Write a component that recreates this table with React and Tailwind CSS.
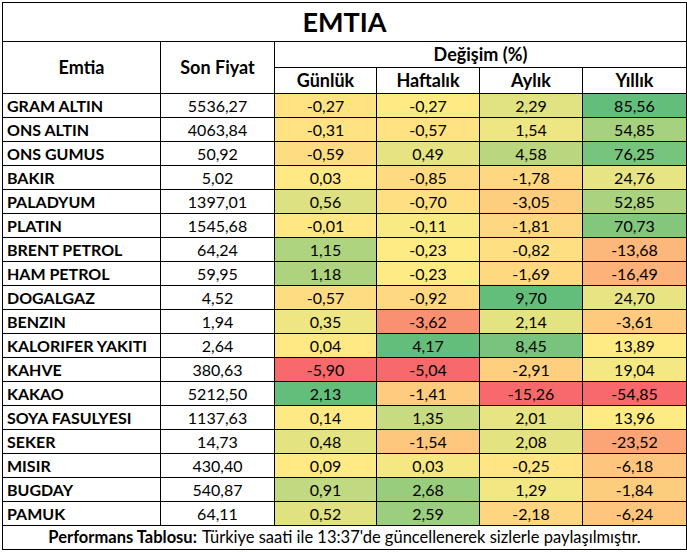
import React from 'react'

const rows = [
  ['GRAM ALTIN', '5536,27', -0.27, -0.27, 2.29, 85.56],
  ['ONS ALTIN', '4063,84', -0.31, -0.57, 1.54, 54.85],
  ['ONS GUMUS', '50,92', -0.59, 0.49, 4.58, 76.25],
  ['BAKIR', '5,02', 0.03, -0.85, -1.78, 24.76],
  ['PALADYUM', '1397,01', 0.56, -0.7, -3.05, 52.85],
  ['PLATIN', '1545,68', -0.01, -0.11, -1.81, 70.73],
  ['BRENT PETROL', '64,24', 1.15, -0.23, -0.82, -13.68],
  ['HAM PETROL', '59,95', 1.18, -0.23, -1.69, -16.49],
  ['DOGALGAZ', '4,52', -0.57, -0.92, 9.7, 24.7],
  ['BENZIN', '1,94', 0.35, -3.62, 2.14, -3.61],
  ['KALORIFER YAKITI', '2,64', 0.04, 4.17, 8.45, 13.89],
  ['KAHVE', '380,63', -5.9, -5.04, -2.91, 19.04],
  ['KAKAO', '5212,50', 2.13, -1.41, -15.26, -54.85],
  ['SOYA FASULYESI', '1137,63', 0.14, 1.35, 2.01, 13.96],
  ['SEKER', '14,73', 0.48, -1.54, 2.08, -23.52],
  ['MISIR', '430,40', 0.09, 0.03, -0.25, -6.18],
  ['BUGDAY', '540,87', 0.91, 2.68, 1.29, -1.84],
  ['PAMUK', '64,11', 0.52, 2.59, -2.18, -6.24],
]

// excel 3 renk skalası: kırmızı - sarı (medyan) - yeşil
const RED = [248, 105, 107]
const YEL = [255, 235, 132]
const GRN = [99, 190, 123]

const mix = (a, b, t) => a.map((v, i) => Math.round(v + (b[i] - v) * t))

const scale = (col) => {
  const vals = rows.map((r) => r[col])
  const s = [...vals].sort((a, b) => a - b)
  const mid = (s[8] + s[9]) / 2
  const min = s[0]
  const max = s[s.length - 1]
  return (v) => {
    const c = v <= mid ? mix(RED, YEL, (v - min) / (mid - min)) : mix(YEL, GRN, (v - mid) / (max - mid))
    return `rgb(${c[0]},${c[1]},${c[2]})`
  }
}

const scales = [2, 3, 4, 5].map((c) => scale(c))

const fmt = (v) => v.toFixed(2).replace('.', ',')

const App = () => {
  return (
    <div className="bg-white w-[687px] h-[552px] overflow-hidden pt-[2px] pl-[2px] text-black font-['Lato',sans-serif]">
      <div className="grid w-[685px] grid-cols-[157px_113px_101px_102px_102px_103px] gap-px bg-black p-px">
        <div className="col-span-6 h-[38px] bg-white flex items-center justify-center text-[27px] font-bold">
          EMTIA
        </div>
        <div className="row-span-2 bg-white flex items-center justify-center text-[18px] font-bold">Emtia</div>
        <div className="row-span-2 bg-white flex items-center justify-center text-[18px] font-bold">Son Fiyat</div>
        <div className="col-span-4 h-[25px] bg-white flex items-center justify-center text-[18px] font-bold">
          Değişim (%)
        </div>
        {['Günlük', 'Haftalık', 'Aylık', 'Yıllık'].map((h) => (
          <div key={h} className="h-[25px] bg-white flex items-center justify-center text-[18px] font-bold">
            {h}
          </div>
        ))}
        {rows.map((r) => (
          <React.Fragment key={r[0]}>
            <div className="h-[23px] bg-white flex items-center pl-[4px] text-[16px] font-bold whitespace-nowrap">
              {r[0]}
            </div>
            <div className="h-[23px] bg-white flex items-center justify-center text-[16px]">{r[1]}</div>
            {[2, 3, 4, 5].map((c, i) => (
              <div
                key={c}
                className="h-[23px] flex items-center justify-center text-[16px]"
                style={{ backgroundColor: scales[i](r[c]) }}
              >
                {fmt(r[c])}
              </div>
            ))}
          </React.Fragment>
        ))}
        <div className="col-span-6 h-[23px] bg-white flex items-center justify-center text-[16.5px] whitespace-nowrap">
          <span className="font-bold mr-[5px]">Performans Tablosu:</span>
          Türkiye saati ile 13:37'de güncellenerek sizlerle paylaşılmıştır.
        </div>
      </div>
    </div>
  )
}

export default App
